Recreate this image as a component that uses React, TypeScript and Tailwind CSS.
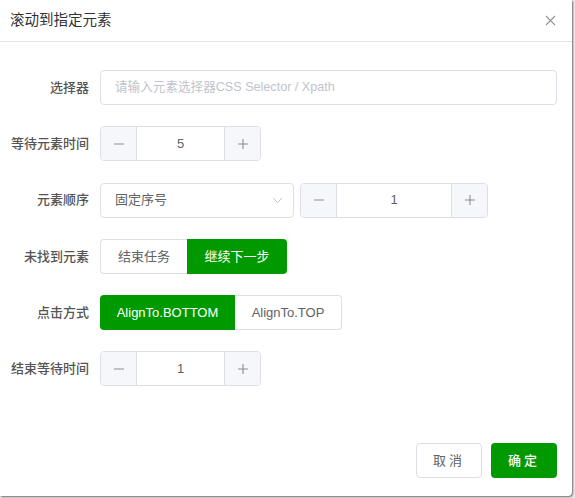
import React from 'react';

const font = { fontFamily: '"Liberation Sans", "Noto Sans CJK SC", sans-serif' };

const Minus = () => (
    <svg width="12" height="12" viewBox="0 0 12 12"><path d="M1 6h10" stroke="#8a8d93" strokeWidth="1.1" /></svg>
);
const Plus = () => (
    <svg width="12" height="12" viewBox="0 0 12 12"><path d="M1 6h10M6 1v10" stroke="#8a8d93" strokeWidth="1.1" /></svg>
);

const NumberInput: React.FC<{ value: number; width: string }> = ({ value, width }) => (
    <div className={`flex h-[35px] ${width} rounded-[4px] border border-[#dcdfe6] overflow-hidden`}>
        <div className="flex w-[36px] items-center justify-center bg-[#f5f7fa] border-r border-[#dcdfe6]">
            <Minus />
        </div>
        <div className="flex flex-1 items-center justify-center text-[13px] text-[#606266]">{value}</div>
        <div className="flex w-[36px] items-center justify-center bg-[#f5f7fa] border-l border-[#dcdfe6]">
            <Plus />
        </div>
    </div>
);

const Row: React.FC<{ label: string; children: React.ReactNode }> = ({ label, children }) => (
    <div className="flex items-center h-[35px]">
        <div className="w-[90px] pr-[1px] text-right text-[13px] text-[#555] font-medium">{label}</div>
        <div className="ml-[10px] flex flex-1 items-center gap-[6px]">{children}</div>
    </div>
);

const Seg: React.FC<{ items: { text: string; w: string }[]; active: number }> = ({ items, active }) => (
    <div className="flex h-[35px]">
        {items.map((it, i) => (
            <div
                key={it.text}
                className={`${it.w} flex items-center justify-center text-[13px] ${
                    i === active ? 'bg-[#009900] text-white' : 'bg-white text-[#606266] border border-[#dcdfe6]'
                } ${i === 0 ? 'rounded-l-[4px]' : ''} ${i === items.length - 1 ? 'rounded-r-[4px]' : ''} ${
                    i === active ? '' : i === 0 ? 'border-r-0' : 'border-l-0'
                }`}
            >
                {it.text}
            </div>
        ))}
    </div>
);

export default function App() {
    return (
        <div className="w-[575px] h-[498px] bg-[#ececec]" style={font}>
            <div className="w-[572px] h-[496px] bg-white rounded-br-[4px] shadow-[1px_1px_2px_rgba(0,0,0,0.55)] flex flex-col">
                <div className="flex h-[42px] items-center justify-between border-b border-[#e4e4e4] pl-[10px] pr-[16px]">
                    <span className="text-[14.5px] text-[#303133]">滚动到指定元素</span>
                    <svg width="11" height="11" viewBox="0 0 11 11">
                        <path d="M1 1l9 9M10 1l-9 9" stroke="#909399" strokeWidth="1.1" />
                    </svg>
                </div>
                <div className="flex flex-col gap-[21.3px] pt-[28px] pr-[15px]">
                    <Row label="选择器">
                        <div className="flex h-[35px] flex-1 items-center rounded-[4px] border border-[#dcdfe6] px-[14px] text-[12.6px] text-[#c0c4cc]">
                            请输入元素选择器CSS Selector / Xpath
                        </div>
                    </Row>
                    <Row label="等待元素时间">
                        <NumberInput value={5} width="w-[161px]" />
                    </Row>
                    <Row label="元素顺序">
                        <div className="flex h-[35px] w-[194px] items-center justify-between rounded-[4px] border border-[#dcdfe6] pl-[14px] pr-[10px] text-[13px] text-[#606266]">
                            <span>固定序号</span>
                            <svg width="11" height="7" viewBox="0 0 11 7">
                                <path d="M1 1l4.5 4.5L10 1" stroke="#c0c4cc" strokeWidth="1" fill="none" />
                            </svg>
                        </div>
                        <NumberInput value={1} width="w-[188px]" />
                    </Row>
                    <Row label="未找到元素">
                        <Seg items={[{ text: '结束任务', w: 'w-[87px]' }, { text: '继续下一步', w: 'w-[100px]' }]} active={1} />
                    </Row>
                    <Row label="点击方式">
                        <Seg items={[{ text: 'AlignTo.BOTTOM', w: 'w-[135px]' }, { text: 'AlignTo.TOP', w: 'w-[107px]' }]} active={0} />
                    </Row>
                    <Row label="结束等待时间">
                        <NumberInput value={1} width="w-[161px]" />
                    </Row>
                </div>
                <div className="mt-auto mb-[18px] flex justify-end gap-[9px] pr-[15px]">
                    <div className="flex h-[35px] w-[66px] items-center justify-center rounded-[4px] border border-[#dcdfe6] text-[13px] text-[#606266] tracking-[3px]">
                        取消
                    </div>
                    <div className="flex h-[35px] w-[66px] items-center justify-center rounded-[4px] bg-[#009900] text-[13px] text-white tracking-[3px] font-medium">
                        确定
                    </div>
                </div>
            </div>
        </div>
    );
}
